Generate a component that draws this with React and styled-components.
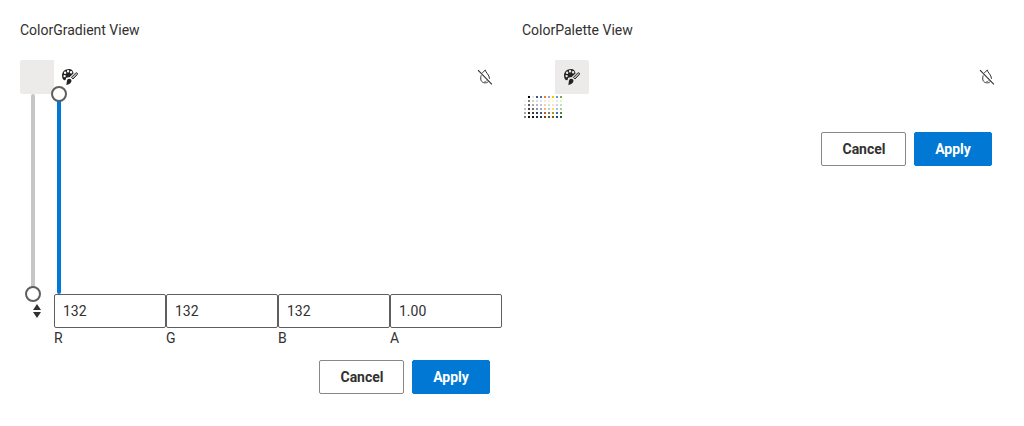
import React from "react";
import styled, { createGlobalStyle } from "styled-components";

const GlobalStyle = createGlobalStyle`
  * { box-sizing: border-box; }
  body {
    margin: 0;
    background: #fff;
    color: #323130;
    font: 400 14px/20px Roboto, sans-serif;
  }
`;

const Page = styled.main`
  display: grid;
  grid-template-columns: 482px 482px;
  column-gap: 20px;
  padding: 20px;
`;

const Panel = styled.section`
  display: flex;
  flex-direction: column;
`;

const Title = styled.div`
  height: 40px;
`;

const Toolbar = styled.div`
  display: flex;
  height: 34px;
`;

const ViewButton = styled.button`
  display: flex;
  align-items: center;
  justify-content: center;
  width: 34px;
  height: 34px;
  padding: 0;
  border: 0;
  margin-left: ${(p) => (p.$last ? "-1px" : "0")};
  border-radius: ${(p) => (p.$last ? "0 2px 2px 0" : "2px 0 0 2px")};
  color: #252423;
  background: ${(p) => (p.$selected ? "#edebe9" : "transparent")};
`;

const ClearButton = styled(ViewButton)`
  margin-left: auto;
`;

const Sliders = styled.div`
  display: flex;
  gap: 22px;
  height: 200px;
  padding-left: 11px;
`;

const Track = styled.div`
  position: relative;
  width: 4px;
  height: 200px;
  border-radius: 2px;
  background: ${(p) => (p.$filled ? "#0078d4" : "#c8c6c4")};
`;

const Thumb = styled.div`
  position: absolute;
  left: -6px;
  ${(p) => (p.$atTop ? "top: -8px;" : "bottom: -8px;")}
  width: 16px;
  height: 16px;
  border: 2px solid #605e5c;
  border-radius: 50%;
  background: #fff;
`;

const InputRow = styled.div`
  display: flex;
`;

const ToggleButton = styled.button`
  display: flex;
  align-items: center;
  justify-content: center;
  width: 34px;
  height: 34px;
  padding: 0;
  border: 0;
  background: none;
  color: #323130;
`;

const Field = styled.label`
  display: flex;
  flex-direction: column;
  width: 112px;
`;

const NumberBox = styled.input`
  width: 112px;
  height: 34px;
  padding: 0 8px;
  border: 1px solid #605e5c;
  border-radius: 2px;
  outline: none;
  background: #fff;
  color: #323130;
  font: inherit;
`;

const Actions = styled.div`
  display: flex;
  justify-content: flex-end;
  gap: 8px;
  margin-top: ${(p) => p.$top}px;
  padding-right: ${(p) => p.$right}px;
`;

const ActionButton = styled.button`
  width: ${(p) => (p.$primary ? 78 : 85)}px;
  height: 34px;
  padding: ${(p) => (p.$primary ? "0" : "0 0 0 1px")};
  border: 1px solid ${(p) => (p.$primary ? "#0078d4" : "#8a8886")};
  border-radius: 2px;
  background: ${(p) => (p.$primary ? "#0078d4" : "#fff")};
  color: ${(p) => (p.$primary ? "#fff" : "#323130")};
  font: 700 14px/20px Roboto, sans-serif;
`;

const Palette = styled.div`
  display: grid;
  grid-template-columns: repeat(10, 2px);
  grid-auto-rows: 2px;
  gap: 2px;
  padding: 2px 0 0 2px;
`;

const Swatch = styled.span`
  background: ${(p) => p.$color};
`;

const COLORS = `
ffffff 000000 e7e6e6 44546a 4472c4 ed7d31 a5a5a5 ffc000 5b9bd5 70ad47
f2f2f2 7f7f7f d0cece d6dce4 d9e2f3 fbe5d5 ededed fff2cc deebf6 e2efd9
d8d8d8 595959 aeabab adb9ca b4c6e7 f7cbac dbdbdb fee599 bdd7ee c5e0b3
bfbfbf 3f3f3f 757070 8496b0 8eaadb f4b183 c9c9c9 ffd965 9cc3e5 a8d08d
a5a5a5 262626 3a3838 323f4f 2f5496 c55a11 7b7b7b bf9000 2e75b5 538135
7f7f7f 0c0c0c 171616 222a35 1f3864 833c0b 525252 7f6000 1e4e79 375623
`.trim().split(/\s+/);

const PaletteIcon = () => (
  <svg width="16" height="16" viewBox="0 0 16 16" fill="currentColor">
    <path
      fillRule="evenodd"
      d="M7 0C3 0 0 2.8 0 6.6 0 9.6 1.6 11.6 3.1 11.3 4.3 11 3.4 9.4 4.7 8.6 5.9 7.9 7 8.5 7.8 7.9L11.6 4.2C11.1 1.6 9.4 0 7 0ZM2.6 5.9a1.2 1.2 0 1 0 0 2.4 1.2 1.2 0 0 0 0-2.4ZM3.1 2.6a1.2 1.2 0 1 0 0 2.4 1.2 1.2 0 0 0 0-2.4ZM6.1 1a1.2 1.2 0 1 0 0 2.4 1.2 1.2 0 0 0 0-2.4ZM9.1 2.1a1.2 1.2 0 1 0 0 2.4 1.2 1.2 0 0 0 0-2.4Z"
    />
    <path d="M9.3 8.5 13.6 4.1Q14.5 3.3 15.2 4 15.9 4.8 15.2 5.7L11 10Z" fill="#b5b3b2" stroke="currentColor" strokeWidth=".9" />
    <path d="M5.4 10.4C6.4 9.3 8.3 9.4 9.1 10.6 10.1 12.2 9 13.7 8 14.5 7 15.3 5.4 15.7 4.1 15.9 5.1 14.7 4.3 12.3 5.4 10.4Z" />
  </svg>
);

const NoColorIcon = () => (
  <svg width="16" height="16" viewBox="0 0 16 16" fill="none" stroke="#323130">
    <path d="M5.4 3.9C6.1 2.8 7.2 1.8 8.4 1.1 8.3 3.3 12.5 5.7 12.5 9.8M11.4 12.5C9.4 14.8 5.1 14.1 4 11.3 3.5 9.8 3.7 8 4.2 6.4" />
    <path d="M7.3 12.7C8.3 12.8 9.1 12.3 9.6 11.6" strokeWidth=".7" />
    <path d="M1 1.1 14.9 15.4" strokeWidth="1.1" />
  </svg>
);

const SortIcon = () => (
  <svg width="16" height="16" viewBox="0 0 16 16" fill="currentColor">
    <path d="M4 7 8 1l4 6ZM4 9h8l-4 6Z" />
  </svg>
);

const ActionBar = ({ top, right }) => (
  <Actions $top={top} $right={right}>
    <ActionButton>Cancel</ActionButton>
    <ActionButton $primary>Apply</ActionButton>
  </Actions>
);

const CHANNELS = [["R", "132"], ["G", "132"], ["B", "132"], ["A", "1.00"]];

export default function App() {
  return (
    <>
      <GlobalStyle />
      <Page>
        <Panel>
          <Title>ColorGradient View</Title>
          <Toolbar>
            <ViewButton $selected aria-label="Gradient" />
            <ViewButton $last aria-label="Palette"><PaletteIcon /></ViewButton>
            <ClearButton aria-label="Clear"><NoColorIcon /></ClearButton>
          </Toolbar>
          <Sliders>
            <Track><Thumb /></Track>
            <Track $filled><Thumb $atTop /></Track>
          </Sliders>
          <InputRow>
            <ToggleButton aria-label="Switch format"><SortIcon /></ToggleButton>
            {CHANNELS.map(([name, value]) => (
              <Field key={name}>
                <NumberBox defaultValue={value} />
                {name}
              </Field>
            ))}
          </InputRow>
          <ActionBar top={12} right={12} />
        </Panel>
        <Panel>
          <Title>ColorPalette View</Title>
          <Toolbar>
            <ViewButton aria-label="Gradient" />
            <ViewButton $last $selected aria-label="Palette"><PaletteIcon /></ViewButton>
            <ClearButton aria-label="Clear"><NoColorIcon /></ClearButton>
          </Toolbar>
          <Palette>
            {COLORS.map((c, i) => <Swatch key={i} $color={`#${c}`} />)}
          </Palette>
          <ActionBar top={14} right={12} />
        </Panel>
      </Page>
    </>
  );
}
